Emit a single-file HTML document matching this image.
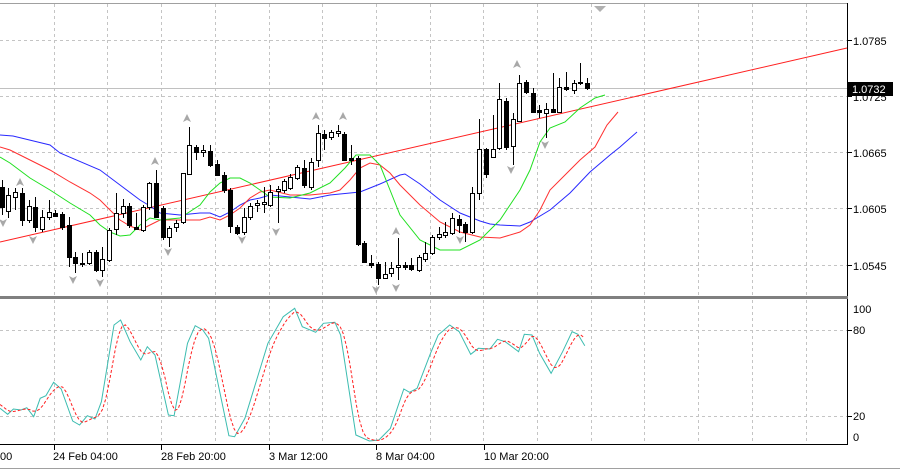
<!DOCTYPE html>
<html><head><meta charset="utf-8"><style>
html,body{margin:0;padding:0;background:#fff;width:900px;height:470px;overflow:hidden}
svg{display:block;font-family:"Liberation Sans",sans-serif;font-size:11px}
</style></head><body>
<svg id="c" width="900" height="470" xmlns="http://www.w3.org/2000/svg">
<rect width="900" height="470" fill="#fff"/>
<g id="grid" stroke="#c4c4c4" stroke-dasharray="3,3" stroke-width="1"></g>
<line x1="0" y1="88.5" x2="847" y2="88.5" stroke="#c0c0c0"/>
<line x1="0" y1="242" x2="847" y2="48" stroke="#ff2020" stroke-width="1"/>
<polyline id="blue" fill="none" stroke="#2828ff" stroke-width="1"/>
<polyline id="red" fill="none" stroke="#ff3030" stroke-width="1"/>
<polyline id="green" fill="none" stroke="#20e020" stroke-width="1"/>
<g id="candles"></g>
<g id="frac" fill="#a8a8a8"></g>
<polyline id="st" fill="none" stroke="#3cbcb0" stroke-width="1"/>
<polyline id="sg" fill="none" stroke="#ff2020" stroke-width="1" stroke-dasharray="3,2"/>
<line x1="0" y1="3.5" x2="847" y2="3.5" stroke="#a0a0a0"/>
<line x1="847.5" y1="3" x2="847.5" y2="445" stroke="#000"/>
<rect x="0" y="296" width="848" height="3" fill="#808080"/>
<line x1="0" y1="444.5" x2="848" y2="444.5" stroke="#000"/>
<line x1="0" y1="468.5" x2="900" y2="468.5" stroke="#a0a0a0"/>
<polygon points="594,6 606,6 600,12" fill="#b0b0b0"/>
<g id="ticks" stroke="#000"></g>
<g fill="#000">
<text x="853" y="45">1.0785</text>
<text x="853" y="101">1.0725</text>
<text x="853" y="157">1.0665</text>
<text x="853" y="213">1.0605</text>
<text x="853" y="270">1.0545</text>
<text x="853" y="313">100</text>
<text x="853" y="334">80</text>
<text x="853" y="420">20</text>
<text x="853" y="441">0</text>
<text x="0" y="460">00</text>
<text x="53" y="460">24 Feb 04:00</text>
<text x="161" y="460">28 Feb 20:00</text>
<text x="269" y="460">3 Mar 12:00</text>
<text x="376" y="460">8 Mar 04:00</text>
<text x="484" y="460">10 Mar 20:00</text>
</g>
<rect x="848" y="82" width="45" height="14" fill="#000"/>
<text x="852" y="93" fill="#fff">1.0732</text>
</svg>
<script>
var NS="http://www.w3.org/2000/svg";
function el(p,t,a){var e=document.createElementNS(NS,t);for(var k in a)e.setAttribute(k,a[k]);p.appendChild(e);return e;}
var g=document.getElementById('grid');
[40,96,152,208,265].forEach(function(y){el(g,'line',{x1:0,x2:847,y1:y+.5,y2:y+.5});});
[330,416].forEach(function(y){el(g,'line',{x1:0,x2:847,y1:y+.5,y2:y+.5});});
for(var k=1;k<=15;k++){var x=Math.round(53.7*k)+.5;el(g,'line',{x1:x,x2:x,y1:4,y2:296});el(g,'line',{x1:x,x2:x,y1:300,y2:444});}
var t=document.getElementById('ticks');
[40,96,152,208,265,330,416].forEach(function(y){el(t,'line',{x1:848,x2:852,y1:y+.5,y2:y+.5});});
[53.7,161,269,376,484].forEach(function(x){el(t,'line',{x1:Math.round(x)+.5,x2:Math.round(x)+.5,y1:445,y2:450});});
var C=[[0,187,207,1,180,215],[6,195,211,0,188,218],[13,192,197,0,188,210],[20,193,220,1,188,226],[27,206,220,0,200,223],[33,207,227,1,197,232],[40,217,229,0,210,232],[47,212,217,0,200,220],[53,213,216,1,210,217],[60,214,227,1,212,230],[67,225,257,1,217,267],[73,257,263,1,252,273],[80,263,264,1,253,267],[87,252,263,0,250,265],[94,252,270,1,250,272],[100,259,270,0,247,277],[107,230,260,0,228,262],[114,213,229,0,193,235],[121,206,213,0,199,218],[127,206,225,1,203,228],[134,227,229,1,213,230],[141,207,230,0,205,232],[147,183,207,0,182,210],[154,183,217,1,170,218],[161,208,237,1,206,240],[167,228,237,0,226,247],[174,223,227,0,220,232],[181,173,222,0,173,224],[187,145,174,0,127,175],[194,147,152,1,145,160],[201,150,152,0,145,157],[208,151,165,1,145,167],[215,164,175,1,160,176],[222,175,190,1,172,193],[228,190,226,1,188,233],[235,227,233,1,225,235],[242,217,232,0,208,235],[248,206,217,0,203,220],[255,203,205,0,200,212],[262,202,204,0,187,213],[268,192,205,0,185,207],[276,189,191,0,186,223],[282,181,190,0,179,193],[288,177,188,0,174,190],[295,167,178,0,165,180],[302,168,185,1,160,188],[309,162,187,0,158,190],[316,133,160,0,125,167],[322,134,138,1,130,150],[329,132,137,0,130,140],[336,131,133,0,125,137],[342,134,160,1,132,161],[349,158,160,1,145,165],[356,158,244,1,156,246],[362,243,262,1,241,263],[369,263,265,1,255,268],[376,264,278,1,262,285],[383,274,278,0,262,279],[389,268,273,0,262,277],[396,265,267,0,238,280],[403,265,267,1,262,270],[409,265,269,1,258,271],[417,257,270,0,255,272],[423,253,259,0,242,262],[430,237,253,0,235,255],[437,234,237,0,227,240],[443,232,235,0,222,238],[450,218,233,0,213,235],[457,219,225,1,215,233],[463,224,232,1,222,242],[470,193,232,0,187,234],[477,149,193,0,119,200],[484,149,174,1,148,178],[491,149,157,0,115,158],[497,99,148,0,83,150],[504,101,147,1,98,150],[511,119,146,0,113,165],[517,83,121,0,75,122],[524,82,92,1,80,94],[531,93,112,1,88,113],[537,110,112,1,105,118],[544,109,113,0,103,138],[551,109,112,1,73,113],[557,87,112,0,78,113],[564,87,89,1,72,91],[572,83,90,0,80,94],[578,82,83,0,63,85],[585,83,88,1,78,90]];
var cg=document.getElementById('candles');
C.forEach(function(c){var x=c[0]+2.5;el(cg,'line',{x1:x,x2:x,y1:c[4],y2:c[5],stroke:'#000'});
el(cg,'rect',{x:c[0]+.5,y:c[1]+.5,width:4,height:Math.max(1,c[2]-c[1]),fill:c[3]?'#000':'#fff',stroke:'#000'});});
function pl(id,pts){document.getElementById(id).setAttribute('points',pts.map(function(p){return p.join(',')}).join(' '));}
pl('blue',[[0,135],[13,136],[50,145],[60,153],[100,170],[120,185],[140,200],[150,206],[160,213],[180,215],[200,213],[210,213],[220,217],[230,212],[240,205],[250,200],[260,198],[270,195],[290,197],[310,199],[330,195],[350,193],[360,192],[380,184],[400,175],[405,174],[420,184],[440,200],[460,213],[480,221],[490,224],[500,225],[520,226],[530,222],[550,210],[570,193],[590,172],[610,155],[620,147],[637,132]]);
pl('red',[[0,147],[10,150],[30,160],[50,170],[70,182],[90,193],[100,200],[110,210],[120,220],[130,226],[140,230],[150,225],[160,220],[180,220],[200,220],[210,217],[220,220],[230,215],[240,208],[250,198],[260,192],[270,190],[290,195],[310,195],[330,193],[340,190],[350,180],[360,168],[370,163],[380,165],[390,173],[400,185],[420,205],[440,222],[460,232],[480,237],[500,238],[520,232],[530,225],[540,210],[550,190],[570,170],[580,160],[595,147],[607,125],[618,112]]);
pl('green',[[0,157],[10,163],[30,178],[50,190],[70,203],[90,215],[100,225],[110,232],[120,236],[130,235],[140,225],[150,218],[160,220],[180,218],[200,205],[210,192],[220,183],[230,178],[240,178],[250,183],[260,190],[270,197],[290,198],[310,193],[330,183],[345,168],[356,155],[370,155],[380,165],[390,190],[400,215],[420,240],[440,250],[460,250],[480,240],[490,230],[500,220],[510,205],[520,190],[530,170],[540,142],[550,128],[565,122],[580,108],[595,98],[605,95]]);
var fr=document.getElementById('frac');
[[20,182],[155,161],[187,118],[316,116],[343,116],[396,231],[517,64]].forEach(function(p){el(fr,'polygon',{points:(p[0]-4)+','+(p[1]+4)+' '+p[0]+','+(p[1]-4)+' '+(p[0]+4)+','+(p[1]+4)+' '+p[0]+','+(p[1]+2)});});
[[3,223],[33,240],[73,280],[100,283],[168,252],[242,240],[276,232],[376,290],[396,288],[460,240],[511,170],[545,145]].forEach(function(p){el(fr,'polygon',{points:(p[0]-4)+','+(p[1]-4)+' '+p[0]+','+(p[1]+4)+' '+(p[0]+4)+','+(p[1]-4)+' '+p[0]+','+(p[1]-2)});});
var S=[[0,340],[20,358],[35,342],[55,345],[70,338],[88,365],[105,310],[120,302],[140,262],[160,282],[190,378],[208,390],[228,362],[248,372],[265,320],[298,90],[315,75],[340,140],[368,195],[385,155],[405,180],[440,360],[455,362],[490,145],[510,92],[530,105],[545,130],[598,422],[613,425],[640,370],[700,145],[740,65],[770,40],[790,95],[825,112],[845,85],[875,82],[890,120],[930,420],[965,438],[990,435],[1020,400],[1055,282],[1070,292],[1090,280],[1125,175],[1145,120],[1175,90],[1200,110],[1230,178],[1250,160],[1280,162],[1300,133],[1320,140],[1355,170],[1370,118],[1390,120],[1410,175],[1440,235],[1470,170],[1495,110],[1510,118],[1528,152]].map(function(p){return [p[0]/2.613,295+p[1]/3];});
pl('st',S.map(function(p){return [p[0].toFixed(1),p[1].toFixed(1)];}));
function yAt(x){for(var i=1;i<S.length;i++){if(S[i][0]>=x){var a=S[i-1],b=S[i];return a[1]+(b[1]-a[1])*(x-a[0])/(b[0]-a[0]);}}return S[S.length-1][1];}
var sig=[];for(var x=0;x<=585;x+=3.3){var v=(yAt(x)+yAt(x-3.3)+yAt(x-6.6)+yAt(x-9.9))/4;sig.push([x.toFixed(1),v.toFixed(1)]);}
pl('sg',sig);
</script>
</body></html>
